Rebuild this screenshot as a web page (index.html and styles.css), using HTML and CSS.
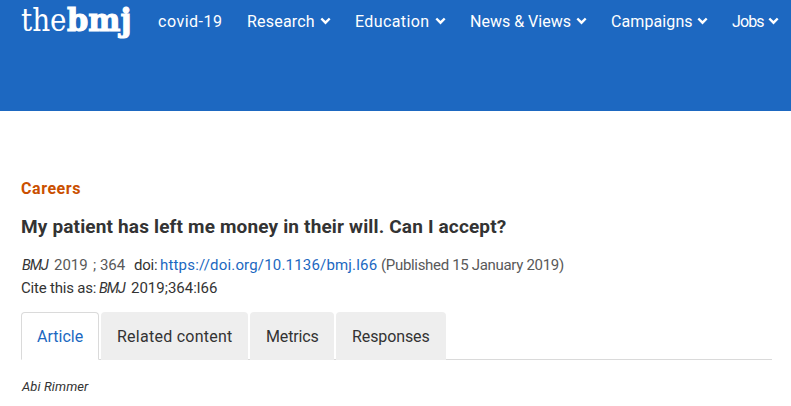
FILE: index.html
```html
<!DOCTYPE html>
<html lang="en">
<head>
    <meta charset="UTF-8">
    <title>My patient has left me money in their will. Can I accept? | The BMJ</title>
    <link rel="stylesheet" href="styles.css">
</head>
<body>
    <header class="header">
        <a class="logo" href="#">
            <svg width="116" height="42" viewBox="0 0 116 42">
                <text class="logo-the" transform="translate(1 31) scale(0.87 1)">the</text>
                <text class="logo-bmj" transform="translate(47 30.5) scale(0.95 0.97)">bmj</text>
            </svg>
        </a>
        <nav class="nav">
            <a class="nav-item covid" href="#"><span>covid-19</span></a>
            <a class="nav-item research" href="#"><span>Research</span><svg class="chevron" viewBox="0 0 11 8"><path d="M1.3 1.5 5.5 5.7 9.7 1.5"/></svg></a>
            <a class="nav-item education" href="#"><span>Education</span><svg class="chevron" viewBox="0 0 11 8"><path d="M1.3 1.5 5.5 5.7 9.7 1.5"/></svg></a>
            <a class="nav-item news" href="#"><span>News &amp; Views</span><svg class="chevron" viewBox="0 0 11 8"><path d="M1.3 1.5 5.5 5.7 9.7 1.5"/></svg></a>
            <a class="nav-item campaigns" href="#"><span>Campaigns</span><svg class="chevron" viewBox="0 0 11 8"><path d="M1.3 1.5 5.5 5.7 9.7 1.5"/></svg></a>
            <a class="nav-item jobs" href="#"><span>Jobs</span><svg class="chevron" viewBox="0 0 11 8"><path d="M1.3 1.5 5.5 5.7 9.7 1.5"/></svg></a>
        </nav>
    </header>

    <main class="article">
        <div class="section-name">Careers</div>
        <h1>My patient has left me money in their will. Can I accept?</h1>

        <div class="citation">
            <em>BMJ</em>
            <span class="muted year">2019</span>
            <span class="muted volume">; 364</span>
            <span class="doi">doi:</span>
            <a class="doi-link" href="#">https://doi.org/10.1136/bmj.l66</a>
            <span class="muted published">(Published 15 January 2019)</span>
        </div>
        <div class="citation cite-as">
            <span class="cite-label">Cite this as:</span>
            <em>BMJ</em>
            <span class="cite-ref">2019;364:l66</span>
        </div>

        <div class="tabs">
            <a class="tab active" href="#">Article</a>
            <a class="tab related" href="#">Related content</a>
            <a class="tab metrics" href="#">Metrics</a>
            <a class="tab responses" href="#">Responses</a>
        </div>

        <p class="author">Abi Rimmer</p>
    </main>
</body>
</html>
```
FILE: styles.css
```css
body {
    margin: 0;
    font-family: Roboto, "Liberation Sans", sans-serif;
    font-size: 16px;
    color: #333;
    background-color: white;
    overflow: hidden;
}

a {
    color: #1b68c1;
    text-decoration: none;
}

.header {
    display: flex;
    align-items: flex-start;
    height: 111px;
    padding-left: 20px;
    background-color: #1d68c1;
    box-sizing: border-box;
}

.logo {
    width: 116px;
    height: 42px;
}

.logo text {
    font-family: "DejaVu Serif", serif;
    font-size: 32px;
    fill: white;
}

.logo .logo-bmj {
    font-weight: bold;
    stroke: white;
    stroke-width: 1.2px;
}

.nav {
    display: flex;
    gap: 24px;
    padding: 10px 0 0 22px;
    line-height: 24px;
}

.nav-item {
    display: flex;
    align-items: center;
    justify-content: space-between;
    color: white;
    white-space: nowrap;
}

.covid { width: 65px; letter-spacing: 0.5px; }
.research { width: 84px; letter-spacing: 0.2px; }
.education { width: 91px; letter-spacing: 0.4px; }
.news { width: 117px; letter-spacing: 0; }
.campaigns { width: 97px; letter-spacing: 0.1px; }
.jobs { width: 47px; letter-spacing: -0.9px; }

.chevron {
    width: 11px;
    height: 8px;
    flex: none;
    margin-top: -3px;
    fill: none;
    stroke: white;
    stroke-width: 2.4;
}

.article {
    padding: 66px 19px 0 21px;
}

.section-name {
    font-weight: bold;
    line-height: 24px;
    letter-spacing: 0.55px;
    color: #ca4f00;
}

h1 {
    margin: 12px 0 13px;
    font-size: 19px;
    line-height: 28px;
    letter-spacing: 0.16px;
}

.citation {
    display: flex;
    font-size: 15px;
    line-height: 23px;
    white-space: nowrap;
}

.citation em {
    width: 32px;
    padding-left: 1px;
    font-size: 14.5px;
    letter-spacing: -1px;
}

.muted {
    color: #595959;
}

.year { width: 39px; }
.volume { width: 41px; }
.doi { width: 26px; letter-spacing: -0.2px; }
.doi-link { width: 221px; letter-spacing: 0.18px; }
.published { letter-spacing: -0.32px; }

.cite-label {
    width: 77px;
    letter-spacing: -0.2px;
}

.tabs {
    display: flex;
    gap: 2px;
    margin-top: 12px;
    border-bottom: 1px solid #dadada;
}

.tab {
    height: 48px;
    margin-bottom: -1px;
    padding-left: 16px;
    border-radius: 4px 4px 0 0;
    background-color: #eee;
    box-sizing: border-box;
    line-height: 49px;
    color: #333;
}

.tab.active {
    width: 78px;
    padding-left: 15px;
    border: 1px solid #dadada;
    border-bottom-color: white;
    background-color: white;
    line-height: 47px;
    color: #1b68c1;
}

.related { width: 147px; letter-spacing: 0.25px; }
.metrics { width: 84px; letter-spacing: -0.15px; }
.responses { width: 110px; letter-spacing: -0.1px; }

.author {
    margin: 17px 0 0;
    padding-left: 1px;
    font-size: 13px;
    line-height: 20px;
    font-style: italic;
    letter-spacing: 0.1px;
}
```
